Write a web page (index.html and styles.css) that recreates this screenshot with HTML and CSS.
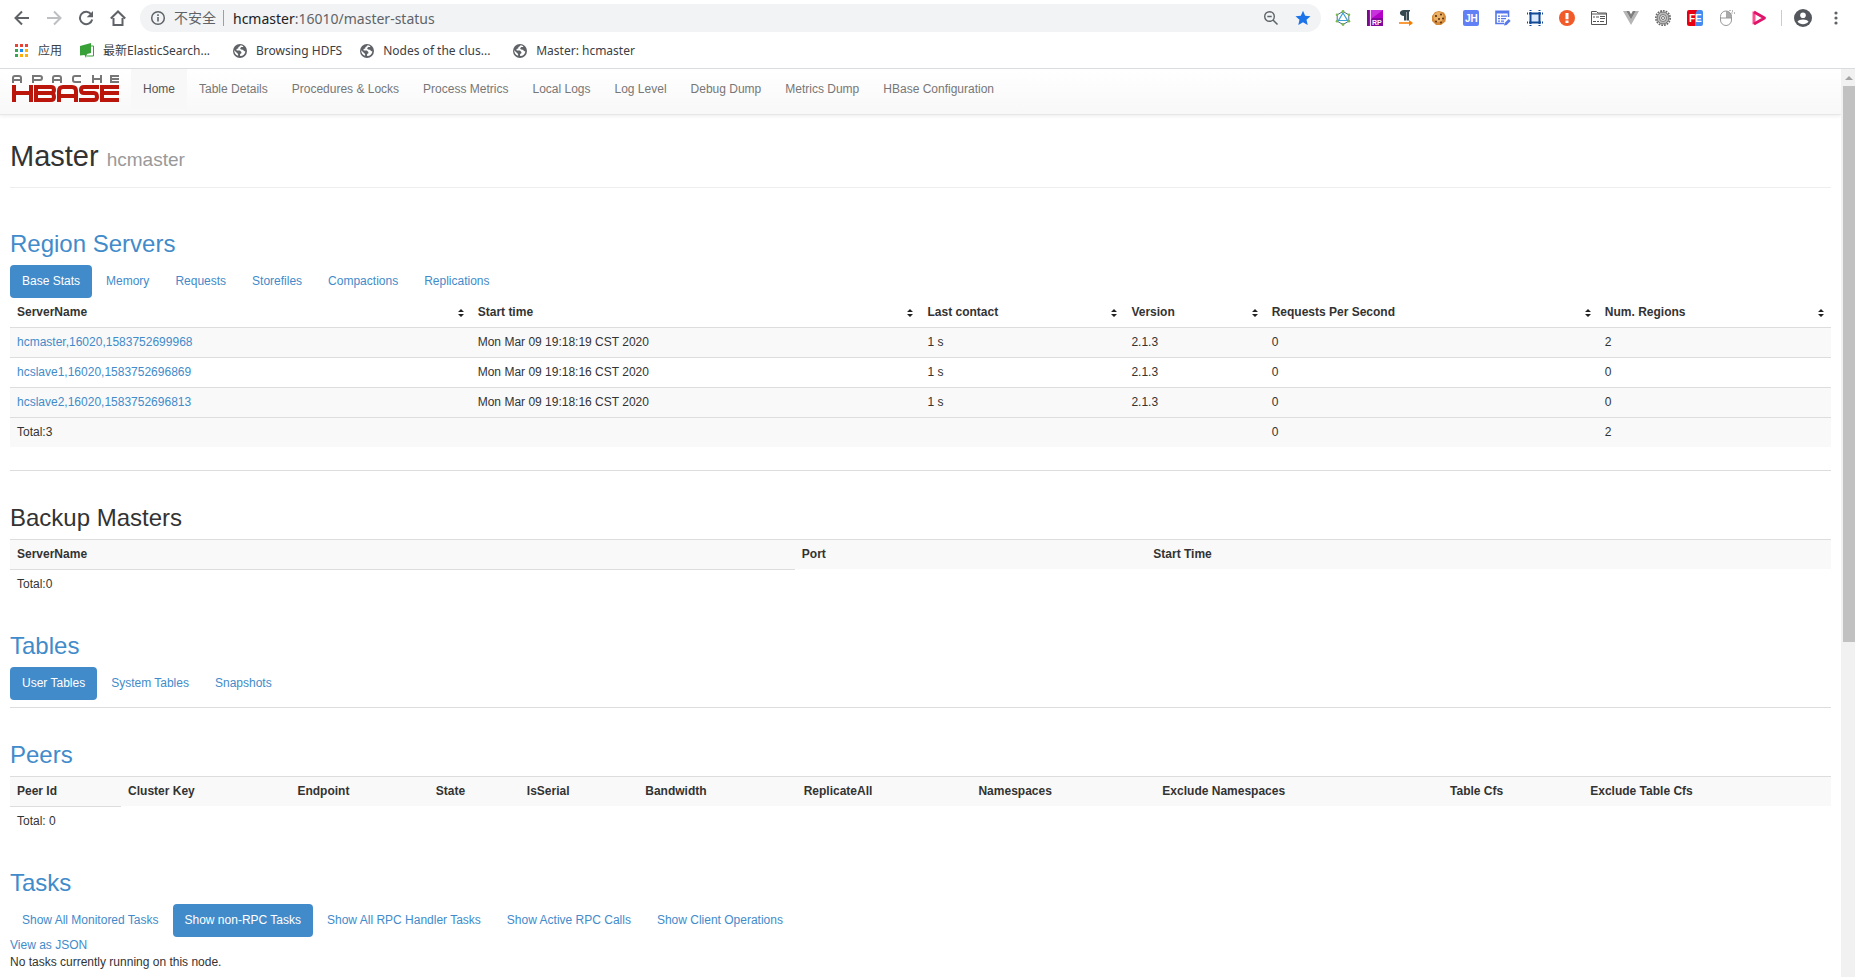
FILE: index.html
```html
<!DOCTYPE html>
<html lang="en">
<head>
  <meta charset="UTF-8" />
  <meta name="viewport" content="width=device-width, initial-scale=1.0"/>
  <title>Master: hcmaster</title>
  <link rel="stylesheet" href="styles.css">
</head>
<body>
  <!-- shared symbols -->
  <svg width="0" height="0" class="defs">
    <symbol id="globe" viewBox="0 0 16 16">
      <circle cx="8" cy="8" r="7" fill="#5f6368"/>
      <path d="M8.4 2.2c-.2 1-1 1.400-1.900 1.700l-.3 1.500-1.700.7.200 1.500h3.200l1.500 1.400v1.300l-1.300.7v1.900c2.600.2 4.900-1.600 5.300-4.500l-1.400-.4-1-1.200-2.100-.2-.8-1.300 1.200-1.200h1.900V3.300A6 6 0 0 0 8.400 2.200zM2.200 7.300c-.1 2.500 1.500 4.800 3.900 5.500V11L4.500 9.500z" fill="#fff"/>
    </symbol>
    <symbol id="sort" viewBox="0 0 6 8">
      <path d="M3 0l3 3H0zM3 8L0 5h6z" fill="#222"/>
    </symbol>
  </svg>

  <header class="browser">
    <div class="toolbar">
      <button class="tool" aria-label="Back"><svg width="16" height="16" viewBox="0 0 16 16"><path d="M15 8H2M8 1.500L1.500 8 8 14.500" fill="none" stroke="#5f6368" stroke-width="2"/></svg></button>
      <button class="tool" aria-label="Forward"><svg width="16" height="16" viewBox="0 0 16 16"><path d="M1 8h13M8 1.500L14.500 8 8 14.500" fill="none" stroke="#bdbfc2" stroke-width="2"/></svg></button>
      <button class="tool" aria-label="Reload"><svg width="16" height="16" viewBox="0 0 16 16"><path d="M13.300 4.500A6.200 6.200 0 1 0 14.200 9.500" fill="none" stroke="#5f6368" stroke-width="2"/><path d="M15 1v6.300H8.700z" fill="#5f6368"/></svg></button>
      <button class="tool" aria-label="Home"><svg width="16" height="16" viewBox="0 0 16 16"><path d="M3.500 8v7h9V8M0.800 8.500L8 1.500l7.200 7" fill="none" stroke="#5f6368" stroke-width="2"/></svg></button>

      <div class="omnibox">
        <svg width="16" height="16" viewBox="0 0 16 16"><circle cx="8" cy="8" r="6.300" fill="none" stroke="#5f6368" stroke-width="1.500"/><path d="M8 7v4.500M8 4.300v1.700" stroke="#5f6368" stroke-width="1.600"/></svg>
        <span class="insecure">不安全</span>
        <span class="url"><b>hcmaster</b>:16010/master-status</span>
        <svg class="zoom" width="16" height="16" viewBox="0 0 16 16"><circle cx="6.500" cy="6.500" r="4.800" fill="none" stroke="#5f6368" stroke-width="1.400"/><path d="M10 10l4.500 4.500M4.300 6.500h4.400" stroke="#5f6368" stroke-width="1.500"/></svg>
        <svg width="16" height="16" viewBox="0 0 16 16"><path d="M8 .8l2.200 4.900 5.300.5-4 3.500 1.200 5.200L8 12.200l-4.700 2.700 1.200-5.200-4-3.500 5.300-.5z" fill="#1a73e8"/></svg>
      </div>

      <div class="extensions">
        <svg width="16" height="16" viewBox="0 0 16 16"><path d="M8 1.500l5.800 3.300v6.400L8 14.500l-5.800-3.300V4.800z" fill="none" stroke="#4d6f82" stroke-width="1"/><path d="M8 3l4.500 7.500h-9z" fill="#fff" stroke="#3b9fd8" stroke-width="1.200"/><g fill="#7cb94c"><circle cx="8" cy="1.500" r="1.400"/><circle cx="14" cy="4.700" r="1.300"/><circle cx="2" cy="4.700" r="1.300"/><circle cx="2" cy="11.300" r="1.300"/><circle cx="14" cy="11.300" r="1.300"/><circle cx="8" cy="14.500" r="1.400"/></g></svg>
        <svg width="16" height="16" viewBox="0 0 16 16"><path d="M0 0h16v16H0z" fill="#b400c8"/><path d="M0 0h2v16H0z" fill="#7b0a8c"/><path d="M3 0h1v16H3z" fill="#f3c9f7"/><path d="M4 0h12L4 9z" fill="#c832dc"/><path d="M5 8h11v8H5z" fill="#85069a"/><text x="5" y="15" class="tag" font-size="7">RP</text></svg>
        <svg width="16" height="16" viewBox="0 0 16 16"><path d="M9 0h1v10.500H7.500V2H7v8.500H5V6C-.5 6-.5 0 5 0z" fill="#37474f"/><path d="M10 0h1v1.500h-1z" fill="#37474f"/><path d="M0 12.300h10V10l4 3-4 3v-2.300H0z" fill="#f57c00"/></svg>
        <svg width="16" height="16" viewBox="0 0 16 16"><path d="M8 1l5 1.500 2 4-.5 5L10 15H5l-4-4V6l3-4z" fill="#d38a3a"/><circle cx="7.500" cy="7" r="5" fill="#eab063"/><g fill="#5a2c10"><circle cx="5" cy="6" r="1.100"/><circle cx="10" cy="4.500" r="1"/><circle cx="8" cy="9" r="1"/><circle cx="12" cy="8.500" r="1"/><circle cx="5" cy="11.500" r="1"/><circle cx="10" cy="12.500" r=".9"/></g></svg>
        <svg width="16" height="16" viewBox="0 0 16 16"><rect width="16" height="16" rx="2" fill="#6180f5"/><text x="2" y="12" class="tag" font-size="10">JH</text></svg>
        <svg width="16" height="16" viewBox="0 0 16 16"><path d="M13.500 7V1.200H1v12.300h8" fill="none" stroke="#5677ea" stroke-width="1.600"/><path d="M1 1h12.500v2.500H1z" fill="#5677ea"/><path d="M3 6.200h2M6 6.200h6M3 8.700h2M6 8.700h5M3 11.200h2M6 11.200h3" stroke="#5677ea" stroke-width="1.300"/><path d="M9 15.500l.6-2.600 4-4 2 2-4 4z" fill="#5677ea"/></svg>
        <svg width="16" height="16" viewBox="0 0 16 16"><path d="M3.500 3.500h9v9h-9z" fill="#dbeaff"/><path d="M3.500 0v16M12.500 0v16M0 3.500h16M0 12.500h16" fill="none" stroke="#134a96" stroke-width="2" stroke-dasharray="1 1 12 1 1"/></svg>
        <svg width="16" height="16" viewBox="0 0 16 16"><circle cx="8" cy="8" r="8" fill="#f15a29"/><path d="M6.500 3h3v6.200h-3zM6.500 10.500h3V13h-3z" fill="#fff"/></svg>
        <svg width="16" height="16" viewBox="0 0 16 16"><path d="M.5 3V1.500h5L7 3h8.500v11.500H.5z" fill="#fff" stroke="#555"/><path d="M.5 4h15" stroke="#555" stroke-width="1"/><path d="M2 7h2M5 7h3M9 6.500h5M9 8.500h5M2 11.500h3M6 11.500h2M9 11.500h4" stroke="#555" stroke-width="1.200"/></svg>
        <svg width="16" height="16" viewBox="0 0 16 16"><path d="M0 1h3.200L8 9.500 12.800 1H16L8 15z" fill="#b5b5b5"/><path d="M3.200 1h3L8 4.200 9.800 1h3L8 9.500z" fill="#7f7f7f"/></svg>
        <svg width="16" height="16" viewBox="0 0 16 16"><circle cx="8" cy="8" r="7.200" fill="none" stroke="#666" stroke-width="1.600" stroke-dasharray="1.800 1"/><circle cx="8" cy="8" r="6" fill="#bbb" stroke="#555" stroke-width=".8"/><circle cx="8" cy="8" r="3.500" fill="#ddd" stroke="#666" stroke-width=".8"/><circle cx="8" cy="8" r="1.500" fill="#fff" stroke="#555" stroke-width=".8"/></svg>
        <svg width="16" height="16" viewBox="0 0 16 16"><path d="M2 0h8v16H2a2 2 0 0 1-2-2V2a2 2 0 0 1 2-2z" fill="#e60012"/><path d="M10 0h4a2 2 0 0 1 2 2v12a2 2 0 0 1-2 2H8V5z" fill="#468cf0"/><text x="2" y="12" class="tag" font-size="10">FE</text></svg>
        <svg width="16" height="16" viewBox="0 0 16 16"><path d="M7 1v7h5.500V6.500A5.500 5.500 0 0 0 7 1z" fill="#aaa"/><path d="M7 1a5.500 5.500 0 0 1 5.500 5.500V10a5.500 5.500 0 0 1-11 0V6.500A5.500 5.500 0 0 1 7 1zM1.500 8h11" fill="none" stroke="#999"/><path d="M10.500.5h1M13 1h1M12.500 3h1M15 3h1" stroke="#777" stroke-width="1.200"/></svg>
        <svg width="16" height="16" viewBox="0 0 16 16"><path d="M3 1.500v12.800" stroke="#ff4f93" stroke-width="3"/><path d="M3 2l10.500 6L3 14" fill="none" stroke="#e0146a" stroke-width="2.800" stroke-linejoin="round"/></svg>
      </div>

      <div class="account">
        <svg width="18" height="18" viewBox="0 0 18 18"><circle cx="9" cy="9" r="9" fill="#54585d"/><circle cx="9" cy="6.300" r="2.800" fill="#fff"/><path d="M3.500 12.500C5 9.800 13 9.800 14.500 12.500 12 16 6 16 3.500 12.500z" fill="#fff"/></svg>
        <svg width="4" height="14" viewBox="0 0 4 14"><g fill="#5f6368"><circle cx="2" cy="2" r="1.600"/><circle cx="2" cy="7" r="1.600"/><circle cx="2" cy="12" r="1.600"/></g></svg>
      </div>
    </div>

    <nav class="bookmarks">
      <a href="#"><svg width="16" height="16" viewBox="0 0 16 16"><path d="M1 1h3v3H1zM6 1h3v3H6zM11 1h3v3h-3z" fill="#ea4335"/><path d="M1 6h3v3H1zM1 11h3v3H1z" fill="#34a853"/><path d="M6 6h3v3H6z" fill="#1a8cf0"/><path d="M11 6h3v3h-3zM6 11h3v3H6zM11 11h3v3h-3z" fill="#fbaf08"/></svg>应用</a>
      <a href="#"><svg width="16" height="16" viewBox="0 0 16 16"><path d="M1 3l11-3v10l-4 1-1 4-1.500-3L1 12.500z" fill="#37a137"/><path d="M12 3h2.500v10H8" fill="none" stroke="#37a137"/></svg><span class="long">最新ElasticSearch...</span></a>
      <a href="#"><svg width="16" height="16"><use href="#globe"/></svg>Browsing HDFS</a>
      <a href="#"><svg width="16" height="16"><use href="#globe"/></svg><span class="long">Nodes of the clus...</span></a>
      <a href="#"><svg width="16" height="16"><use href="#globe"/></svg>Master: hcmaster</a>
    </nav>
  </header>

  <div class="viewport">
    <div class="page">
      <div class="navbar">
        <a class="logo" href="#" aria-label="Apache HBase">
          <svg width="108" height="28" viewBox="0 0 108 28" fill="none">
            <g stroke="#777" stroke-width="2">
              <path d="M1 8V3q0-2 2-2h4q2 0 2 2v5M1 5h8"/>
              <path d="M21 8V1h7q2 0 2 2t-2 2h-7"/>
              <path d="M41 8V3q0-2 2-2h4q2 0 2 2v5M41 5h8"/>
              <path d="M69 1h-6q-2 0-2 2v2q0 2 2 2h6"/>
              <path d="M81 0v8M89 0v8M81 4h8"/>
              <path d="M107 1h-8v6h8M99 4h8"/>
            </g>
            <g stroke="#ba160c" stroke-width="4">
              <path d="M2 10v17M19 10v17M2 18h17"/>
              <path d="M22 12h17q3 0 3 3t-3 3H24M39 18q3 0 3 4 0 3-3 3H24V12"/>
              <path d="M47 27V16q0-4 4-4h9q4 0 4 4v11M47 21h17"/>
              <path d="M87 12H72q-3 0-3 3t3 3h10q3 0 3 4 0 3-3 3H67"/>
              <path d="M107 12H90v13h17M90 18h17"/>
            </g>
          </svg>
        </a>
        <nav class="menu">
          <a class="active" href="#">Home</a>
          <a href="#">Table Details</a>
          <a href="#">Procedures &amp; Locks</a>
          <a href="#">Process Metrics</a>
          <a href="#">Local Logs</a>
          <a href="#">Log Level</a>
          <a href="#">Debug Dump</a>
          <a href="#">Metrics Dump</a>
          <a href="#">HBase Configuration</a>
        </nav>
      </div>

      <main class="container">
        <h1>Master <small>hcmaster</small></h1>

        <section>
          <h2><a href="#">Region Servers</a></h2>
          <nav class="tabs">
            <a class="active" href="#">Base Stats</a>
            <a href="#">Memory</a>
            <a href="#">Requests</a>
            <a href="#">Storefiles</a>
            <a href="#">Compactions</a>
            <a href="#">Replications</a>
          </nav>
          <table class="servers">
            <colgroup><col class="s-name"><col class="s-start"><col class="s-contact"><col class="s-version"><col class="s-requests"><col></colgroup>
            <thead>
              <tr>
                <th><div>ServerName<svg width="6" height="8"><use href="#sort"/></svg></div></th>
                <th><div>Start time<svg width="6" height="8"><use href="#sort"/></svg></div></th>
                <th><div>Last contact<svg width="6" height="8"><use href="#sort"/></svg></div></th>
                <th><div>Version<svg width="6" height="8"><use href="#sort"/></svg></div></th>
                <th><div>Requests Per Second<svg width="6" height="8"><use href="#sort"/></svg></div></th>
                <th><div>Num. Regions<svg width="6" height="8"><use href="#sort"/></svg></div></th>
              </tr>
            </thead>
            <tbody>
              <tr class="odd"><td><a href="#">hcmaster,16020,1583752699968</a></td><td>Mon Mar 09 19:18:19 CST 2020</td><td>1 s</td><td>2.1.3</td><td>0</td><td>2</td></tr>
              <tr><td><a href="#">hcslave1,16020,1583752696869</a></td><td>Mon Mar 09 19:18:16 CST 2020</td><td>1 s</td><td>2.1.3</td><td>0</td><td>0</td></tr>
              <tr class="odd"><td><a href="#">hcslave2,16020,1583752696813</a></td><td>Mon Mar 09 19:18:16 CST 2020</td><td>1 s</td><td>2.1.3</td><td>0</td><td>0</td></tr>
              <tr class="odd"><td>Total:3</td><td></td><td></td><td></td><td>0</td><td>2</td></tr>
            </tbody>
          </table>
          <hr class="spaced">
        </section>

        <section>
          <h2>Backup Masters</h2>
          <table>
            <colgroup><col class="b-name"><col class="b-port"><col></colgroup>
            <tbody>
              <tr class="odd"><th>ServerName</th><th>Port</th><th>Start Time</th></tr>
              <tr><td>Total:0</td></tr>
            </tbody>
          </table>
        </section>

        <section>
          <h2><a href="#">Tables</a></h2>
          <nav class="tabs">
            <a class="active" href="#">User Tables</a>
            <a href="#">System Tables</a>
            <a href="#">Snapshots</a>
          </nav>
          <hr>
        </section>

        <section>
          <h2><a href="#">Peers</a></h2>
          <table>
            <colgroup><col class="p-id"><col class="p-key"><col class="p-endpoint"><col class="p-state"><col class="p-serial"><col class="p-bandwidth"><col class="p-replicate"><col class="p-ns"><col class="p-exns"><col class="p-cfs"><col></colgroup>
            <tbody>
              <tr class="odd"><th>Peer Id</th><th>Cluster Key</th><th>Endpoint</th><th>State</th><th>IsSerial</th><th>Bandwidth</th><th>ReplicateAll</th><th>Namespaces</th><th>Exclude Namespaces</th><th>Table Cfs</th><th>Exclude Table Cfs</th></tr>
              <tr><td>Total: 0</td></tr>
            </tbody>
          </table>
        </section>

        <section>
          <h2><a href="#">Tasks</a></h2>
          <nav class="tabs">
            <a href="#">Show All Monitored Tasks</a>
            <a class="active" href="#">Show non-RPC Tasks</a>
            <a href="#">Show All RPC Handler Tasks</a>
            <a href="#">Show Active RPC Calls</a>
            <a href="#">Show Client Operations</a>
          </nav>
          <a href="#">View as JSON</a>
          <p>No tasks currently running on this node.</p>
        </section>
      </main>
    </div>

    <div class="scrollbar">
      <div class="arrow"></div>
      <div class="track"><div class="thumb"></div></div>
    </div>
  </div>
</body>
</html>
```
FILE: styles.css
```css
* {
  box-sizing: border-box;
}

body {
  margin: 0;
  height: 100vh;
  display: flex;
  flex-direction: column;
  overflow: hidden;
  background: #fff;
  color: #333;
  font-family: "Liberation Sans", Arial, sans-serif;
  font-size: 12px;
  line-height: 17px;
}

a {
  color: #428bca;
  text-decoration: none;
}

svg {
  flex: none;
}

.defs {
  position: absolute;
}

/* Browser bars */
.browser {
  flex: none;
  border-bottom: 1px solid #dadce0;
  font-family: "Noto Sans", "Noto Sans CJK SC", sans-serif;
}

.toolbar {
  display: flex;
  align-items: center;
  height: 36px;
  padding: 0 17px 0 14px;
}

.tool {
  display: flex;
  width: 16px;
  margin-right: 16px;
  padding: 0;
  border: none;
  background: none;
}

.omnibox {
  flex: 1;
  display: flex;
  align-items: center;
  height: 28px;
  margin-left: -2px;
  padding: 0 10px;
  border-radius: 14px;
  background: #f1f3f4;
  color: #5f6368;
  font-size: 14px;
}

.insecure {
  margin: 0 9px 0 8px;
  padding-right: 7px;
  border-right: 1px solid #9aa0a6;
  line-height: 16px;
}

.url b {
  color: #202124;
  font-weight: normal;
}

.zoom {
  margin: 0 16px 0 auto;
}

.extensions {
  display: flex;
  gap: 16px;
  margin-left: 14px;
  padding-right: 14px;
  border-right: 1px solid #ccc;
}

.account {
  display: flex;
  align-items: center;
  gap: 22px;
  margin-left: 12px;
}

.tag {
  fill: #fff;
  font-family: "Liberation Sans", Arial, sans-serif;
  font-weight: bold;
}

.bookmarks {
  display: flex;
  gap: 17px;
  height: 32px;
  padding: 0 14px 3px;
}

.bookmarks a {
  display: flex;
  align-items: center;
  gap: 8px;
  color: #3c4043;
}

.long {
  width: 112px;
  white-space: nowrap;
}

/* Page and scrollbar */
.viewport {
  flex: 1;
  display: flex;
  min-height: 0;
}

.page {
  flex: 1;
  overflow: hidden;
}

.scrollbar {
  display: flex;
  flex-direction: column;
  width: 14px;
  padding-left: 2px;
  background: #f1f1f1;
}

.arrow {
  height: 17px;
  padding: 7px 2px;
}

.arrow::before {
  content: "";
  display: block;
  width: 0;
  border: 4px solid transparent;
  border-top: none;
  border-bottom-color: #a3a3a3;
}

.track {
  flex: 1;
}

.thumb {
  height: 62.4%;
  background: #c1c1c1;
}

/* Navbar */
.navbar {
  display: flex;
  height: 46px;
  padding-left: 12px;
  border-bottom: 1px solid #e7e7e7;
  background: linear-gradient(#fff, #f8f8f8);
  box-shadow: 0 1px 4px rgba(0,0,0,0.08);
}

.logo {
  width: 119px;
  padding-top: 6px;
}

.menu {
  display: flex;
}

.menu a {
  height: 40px;
  padding: 12px;
  color: #777;
}

.menu .active {
  background: #f8f8f8;
  color: #555;
}

/* Content */
.container {
  padding: 0 10px;
}

h1, h2 {
  margin: 0;
  font-weight: normal;
}

h1 {
  margin: 25px 0 43px;
  padding-bottom: 11px;
  border-bottom: 1px solid #eee;
  font-size: 29px;
  line-height: 32px;
}

h1 small {
  color: #999;
  font-size: 19px;
}

h2 {
  margin-bottom: 8px;
  font-size: 24px;
  line-height: 26px;
}

section {
  margin-bottom: 34px;
}

p {
  margin: 0;
}

hr {
  margin: 7px 0 0;
  border: none;
  border-top: 1px solid #ddd;
}

hr.spaced {
  margin-top: 23px;
}

.tabs {
  display: flex;
  gap: 2px;
}

.tabs a {
  padding: 8px 12px;
  border-radius: 4px;
}

.tabs .active {
  background: #428bca;
  color: #fff;
}

table {
  width: 100%;
  border-collapse: separate;
  border-spacing: 0;
  table-layout: fixed;
}

th, td {
  padding: 6px 7px;
  border-top: 1px solid #ddd;
  text-align: left;
  white-space: nowrap;
}

.odd th, .odd td {
  background: #f9f9f9;
}

.servers th {
  border-top: none;
}

.servers th div {
  display: flex;
  align-items: center;
  justify-content: space-between;
}

/* Column widths */
.s-name { width: 25.3%; }
.s-start { width: 24.7%; }
.s-contact { width: 11.2%; }
.s-version { width: 7.7%; }
.s-requests { width: 18.3%; }

.b-name { width: 43.1%; }
.b-port { width: 19.3%; }

.p-id { width: 6.1%; }
.p-key { width: 9.3%; }
.p-endpoint { width: 7.6%; }
.p-state { width: 5%; }
.p-serial { width: 6.5%; }
.p-bandwidth { width: 8.7%; }
.p-replicate { width: 9.6%; }
.p-ns { width: 10.1%; }
.p-exns { width: 15.8%; }
.p-cfs { width: 7.7%; }
```
